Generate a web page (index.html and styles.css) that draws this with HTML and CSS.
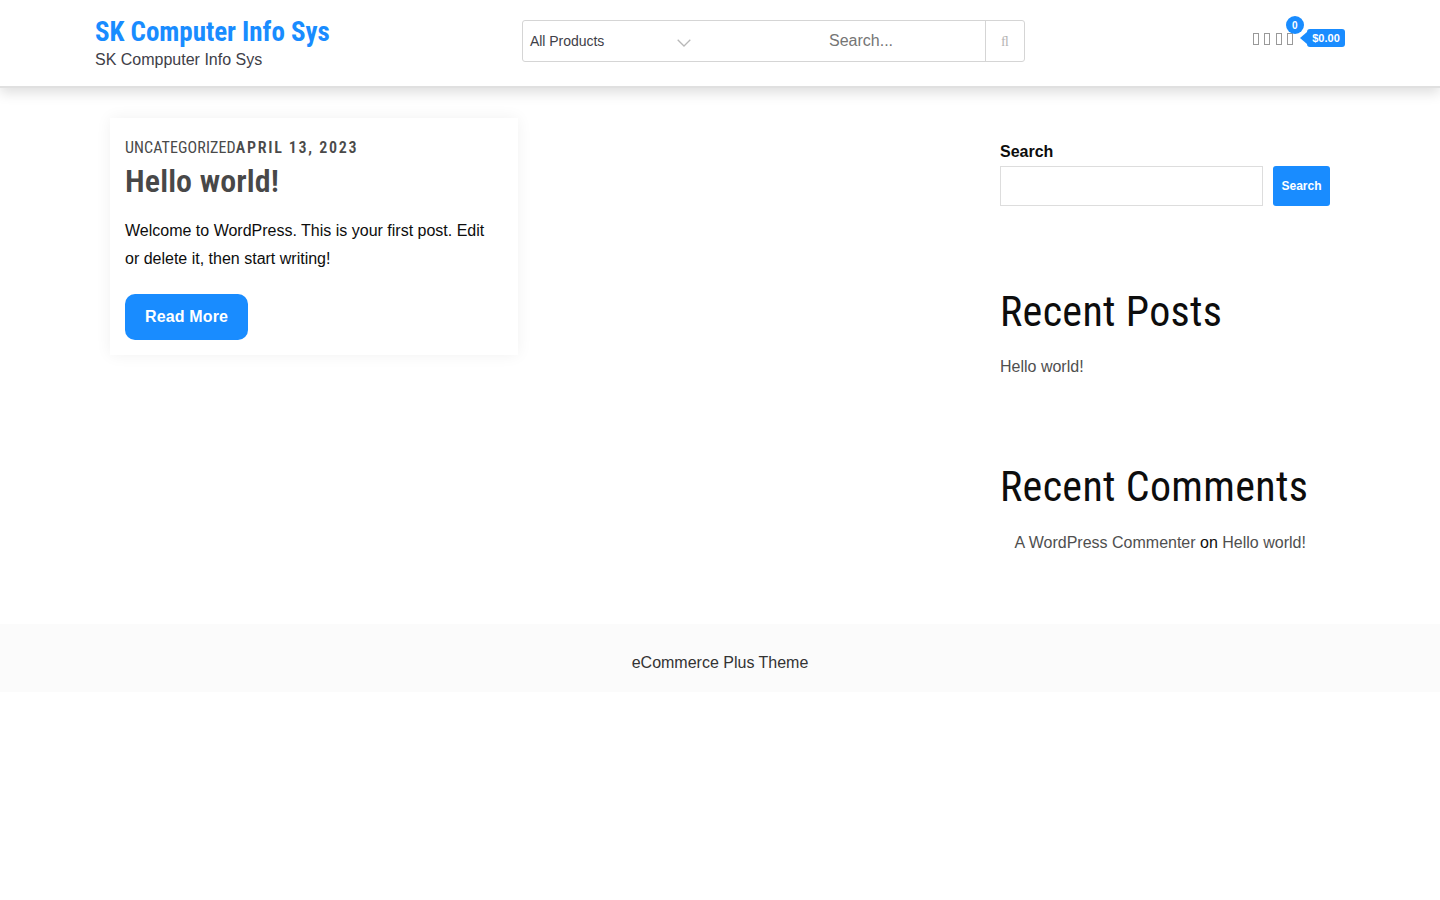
FILE: index.html
```
<!DOCTYPE html>
<html lang="en"><head><meta charset="utf-8"><title>SK Computer Info Sys</title><link rel="stylesheet" href="styles.css"></head>
<body>
<header class="header">
  <div class="brand"><a class="brand-name">SK Computer Info Sys</a><p class="tagline">SK Compputer Info Sys</p></div>
  <form class="search-bar">
    <div class="category"><span>All Products</span><svg class="chevron" width="14" height="8" viewBox="0 0 14 8"><path d="M.7.8 7 7 13.3.8" fill="none" stroke="#b8b8b8" stroke-width="1.3"/></svg></div>
    <input class="query" type="text" placeholder="Search...">
    <button class="go" type="button">&#xfb02;</button>
  </form>
  <div class="tools"><span class="glyph"></span><span class="glyph"></span><span class="glyph"></span><span class="glyph"><b class="count">0</b></span><span class="price">$0.00</span></div>
</header>
<div class="content">
  <main class="main"><article class="card">
    <div class="meta">UNCATEGORIZED<b class="date">APRIL 13, 2023</b></div>
    <h2 class="title">Hello world!</h2>
    <p class="excerpt">Welcome to WordPress. This is your first post. Edit or delete it, then start writing!</p>
    <a class="more">Read More</a>
  </article></main>
  <aside class="side">
    <section class="widget search-widget"><label class="label">Search</label><div class="row"><input class="field" type="text"><button class="submit" type="button">Search</button></div></section>
    <section class="widget posts"><h2 class="heading">Recent Posts</h2><a class="link">Hello world!</a></section>
    <section class="widget comments"><h2 class="heading">Recent Comments</h2><p class="comment"><a class="link">A WordPress Commenter</a> on <a class="link">Hello world!</a></p></section>
  </aside>
</div>
<footer class="footer">eCommerce Plus Theme</footer>
</body></html>
```

FILE: styles.css
```
* { box-sizing: border-box; }
body { margin: 0; background: #fff; color: #0d0d0d; font: 16px/28px "Liberation Sans", Arial, sans-serif; }
p, h2 { margin: 0; }
.header { display: flex; height: 88px; padding: 0 95px; border-bottom: 2px solid #e0e0e0; box-shadow: 0 5px 12px rgba(0,0,0,.13); }
.brand { width: 427px; padding-top: 14px; }
.brand-name { display: block; font: 700 27px/36px "Roboto Condensed", Roboto, sans-serif; letter-spacing: -.04px; color: #198cff; white-space: nowrap; }
.tagline { line-height: 20px; color: #404048; }
.search-bar { display: flex; width: 503px; height: 42px; margin-top: 20px; border: 1px solid #d5d5d5; border-radius: 3px; }
.category { display: flex; justify-content: space-between; align-items: center; width: 168px; padding-left: 7px; font-size: 14px; letter-spacing: -.04px; color: #404048; }
.chevron { margin: 3px 0 0; }
.query { width: 294px; padding: 0 0 0 138px; border: 0; background: none; font: 16px "Liberation Sans", sans-serif; }
.go { width: 39px; padding: 1px 0 0; border: 0; border-left: 1px solid #d5d5d5; background: none; color: #b5b5b5; font: 14px "Liberation Serif", serif; }
.tools { display: flex; margin: 29px 0 0 auto; height: 18px; }
.glyph { position: relative; width: 6px; height: 12px; margin: 4px 5.2px 0 0; border: 1px solid #999; }
.count { position: absolute; left: -2px; top: -18px; width: 18px; height: 18px; border-radius: 50%; background: #198cff; color: #fff; font-size: 10px; line-height: 19px; text-align: center; }
.price { position: relative; width: 38px; margin-left: 9px; border-radius: 3px; background: #198cff; color: #fff; font-size: 11px; font-weight: 700; line-height: 18px; text-align: center; }
.price::before { content: ""; position: absolute; left: -7px; top: 3px; border: 6px solid transparent; border-left: 0; border-right: 7px solid #198cff; }
.content { display: flex; justify-content: space-between; height: 536px; padding: 30px 110px 0; }
.card { width: 408px; height: 237px; padding: 16px 15px 15px; box-shadow: 0 0 15px rgba(0,0,0,.06); }
.meta { font: 400 16px/28px "Roboto Condensed", Roboto, sans-serif; letter-spacing: .1px; color: #4a4a4a; }
.date { font-weight: 600; letter-spacing: 1.7px; }
.title { font: 600 32px/38px "Roboto Condensed", Roboto, sans-serif; letter-spacing: .1px; color: #484848; }
.excerpt { padding: 17px 15px 0 0; }
.more { display: inline-block; height: 46px; margin-top: 21px; padding: 0 20px; border-radius: 10px; background: #198cff; color: #fff; font-weight: 700; letter-spacing: .14px; line-height: 45px; }
.side { width: 330px; }
.label { display: block; padding-top: 20px; font-weight: 700; }
.row { display: flex; justify-content: space-between; height: 40px; }
.field { width: 263px; border: 1px solid #ddd; }
.submit { width: 57px; padding: 0; border: 0; border-radius: 3px; background: #198cff; color: #fff; font: 700 12px "Liberation Sans", sans-serif; }
.heading { margin-bottom: 15px; font: 400 42px/52px "Roboto Condensed", Roboto, sans-serif; letter-spacing: .33px; }
.posts, .comments { padding-top: 80px; }
.comments .heading { margin-bottom: 16px; }
.link { color: #4f4f4f; }
.comment { padding-left: 14.5px; }
.footer { height: 68px; background: #fbfbfb; color: #333; text-align: center; line-height: 77px; }
```
